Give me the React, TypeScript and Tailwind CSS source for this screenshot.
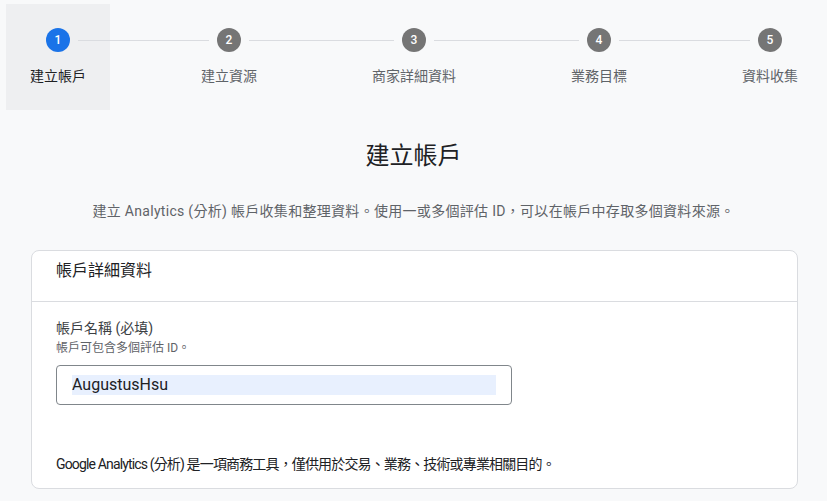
import React from 'react';

// --- Data ---
const STEPS = ['建立帳戶', '建立資源', '商家詳細資料', '業務目標', '資料收集'];
const ACTIVE_STEP = 0;

function StepHeader({ index, label }: { index: number; label: string }) {
    const isActive = index === ACTIVE_STEP;
    const isFirst = index === 0;
    const isLast = index === STEPS.length - 1;

    return (
        <div className={`flex flex-col items-center px-6 pt-6 pb-6 ${isActive ? 'bg-[#eeeff1]' : ''}`}>
            <div className="flex w-full items-center">
                <div className={`h-px flex-1 -ml-6 mr-2 ${isFirst ? '' : 'bg-[#dadce0]'}`}></div>
                <div
                    className={`flex h-6 w-6 shrink-0 items-center justify-center rounded-full text-[12px] font-medium text-white ${
                        isActive ? 'bg-[#1a73e8]' : 'bg-[#757575]'
                    }`}
                >
                    {index + 1}
                </div>
                <div className={`h-px flex-1 ml-2 -mr-6 ${isLast ? '' : 'bg-[#dadce0]'}`}></div>
            </div>
            <div
                className={`mt-[14px] whitespace-nowrap text-[14px] leading-5 ${
                    isActive ? 'text-[#202124]' : 'text-[#5f6368]'
                }`}
            >
                {label}
            </div>
        </div>
    );
}

export default function App() {
    return (
        <div
            className="min-h-[501px] w-full bg-[#f8f9fa] text-[#202124]"
            style={{ fontFamily: 'Roboto, "Noto Sans CJK TC", "Noto Sans", sans-serif' }}
        >
            {/* --- Stepper --- */}
            <div className="flex items-start pt-1 pl-[6px] pr-[5px]">
                {STEPS.map((label, i) => (
                    <React.Fragment key={label}>
                        <StepHeader index={i} label={label} />
                        {i < STEPS.length - 1 && (
                            <div className="mt-[36px] h-px flex-1 bg-[#dadce0]"></div>
                        )}
                    </React.Fragment>
                ))}
            </div>

            {/* --- Heading --- */}
            <div className="mt-[30px] text-center">
                <h1 className="text-[24px] font-normal leading-8 text-[#202124]">建立帳戶</h1>
                <p className="mt-[29px] text-[14px] leading-5 tracking-[0.3px] text-[#5f6368]">
                    建立 Analytics (分析) 帳戶收集和整理資料。使用一或多個評估 ID，可以在帳戶中存取多個資料來源。
                </p>
            </div>

            {/* --- Card --- */}
            <div className="ml-[31px] mr-[29px] mt-[29px] rounded-lg border border-[#dadce0] bg-white">
                <div className="border-b border-[#dadce0] px-6 pt-2 pb-[18px] text-[16px] leading-6 text-[#202124]">
                    帳戶詳細資料
                </div>
                <div className="px-6 pt-4 pb-[14px]">
                    <div className="text-[14px] leading-5 text-[#3c4043]">帳戶名稱 (必填)</div>
                    <div className="mt-[2px] text-[12px] leading-4 text-[#5f6368]">帳戶可包含多個評估 ID。</div>
                    <div className="mt-[9px] flex h-[40px] w-[456px] items-center rounded border border-[#80868b] px-[15px]">
                        <div className="flex h-5 w-full items-center bg-[#e8f0fe] text-[16px] leading-5 text-[#202124]">
                            AugustusHsu
                        </div>
                    </div>
                    <p className="mt-[49px] text-[14px] leading-5 tracking-[-0.85px] text-[#202124]">
                        Google Analytics (分析) 是一項商務工具，僅供用於交易、業務、技術或專業相關目的。
                    </p>
                </div>
            </div>
        </div>
    );
}
